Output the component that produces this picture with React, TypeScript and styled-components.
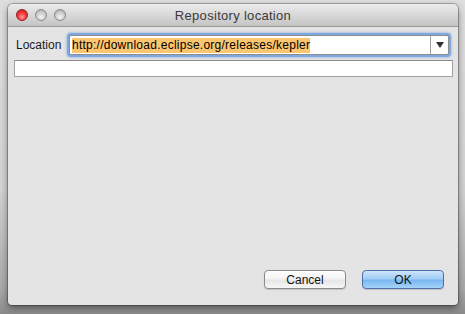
import React from "react";
import styled, { createGlobalStyle } from "styled-components";

const Global = createGlobalStyle`
  html, body { margin: 0; padding: 0; }
  body {
    width: 465px; height: 314px; overflow: hidden;
    background: #d6d6d6;
    font-family: "Liberation Sans", Arial, sans-serif;
  }
`;

const Desk = styled.div`
  width: 465px;
  height: 314px;
  box-sizing: border-box;
  padding: 4px 7px 0 8px;
  background: linear-gradient(180deg, #dedede 0%, #d2d2d2 60%, #a9a9a9 92%, #8a8a8a 100%);
`;

const Win = styled.div`
  width: 450px;
  height: 301px;
  display: flex;
  flex-direction: column;
  background: #e4e4e4;
  border-radius: 5px 5px 4px 4px;
  box-shadow: 0 0 0 1px rgba(0,0,0,0.25), 0 3px 7px rgba(0,0,0,0.45);
  overflow: hidden;
`;

const TitleBar = styled.div`
  height: 22px;
  flex: none;
  position: relative;
  display: flex;
  align-items: center;
  justify-content: center;
  background: linear-gradient(180deg, #ebebeb 0%, #d8d8d8 50%, #c4c4c4 100%);
  border-bottom: 1px solid #9a9a9a;
`;

const Lights = styled.div`
  position: absolute;
  left: 8px;
  top: 5px;
  display: flex;
  gap: 7px;
`;

const Light = styled.div<{ $red?: boolean }>`
  width: 12px;
  height: 12px;
  border-radius: 50%;
  box-sizing: border-box;
  border: 1px solid ${p => (p.$red ? "#9a1c1c" : "#8a8a8a")};
  background: ${p =>
    p.$red
      ? "radial-gradient(circle at 50% 70%, #ff9a9a 0%, #f23f3f 45%, #c81616 100%)"
      : "radial-gradient(circle at 50% 70%, #f4f4f4 0%, #cfcfcf 50%, #a5a5a5 100%)"};
`;

const Title = styled.div`
  font-size: 13px;
  color: #3a3a3a;
  letter-spacing: 0.3px;
  margin-top: 1px;
`;

const Body = styled.div`
  flex: 1;
  display: flex;
  flex-direction: column;
  padding: 7px 5px 16px 6px;
`;

const Row = styled.div`
  display: flex;
  align-items: center;
  height: 22px;
`;

const Label = styled.div`
  font-size: 12px;
  color: #1a1a1a;
  width: 55px;
  padding-left: 2px;
  box-sizing: border-box;
`;

const Combo = styled.div`
  width: 378px;
  height: 18px;
  display: flex;
  background: #fff;
  border: 1px solid #8d8d8d;
  border-radius: 2px;
  box-shadow: 0 0 0 2px #7ea8df, 0 0 2px 3px rgba(120,160,220,0.45);
`;

const ComboText = styled.div`
  flex: 1;
  display: flex;
  align-items: center;
  padding-left: 2px;
  font-size: 12px;
`;

const Sel = styled.span`
  background: #fcc670;
  color: #000;
  line-height: 15px;
  letter-spacing: 0.25px;
`;

const Arrow = styled.div`
  width: 17px;
  border-left: 1px solid #a0a0a0;
  display: flex;
  align-items: center;
  justify-content: center;
`;

const Field = styled.div`
  margin-top: 4px;
  width: 439px;
  height: 17px;
  box-sizing: border-box;
  background: #fff;
  border: 1px solid #a2a2a2;
  border-top-color: #8a8a8a;
`;

const Spacer = styled.div`
  flex: 1;
`;

const Buttons = styled.div`
  display: flex;
  justify-content: flex-end;
  gap: 16px;
  padding-right: 9px;
`;

const Button = styled.div<{ $primary?: boolean }>`
  width: 82px;
  height: 19px;
  box-sizing: border-box;
  border-radius: 4px;
  display: flex;
  align-items: center;
  justify-content: center;
  font-size: 12px;
  color: #111;
  border: 1px solid ${p => (p.$primary ? "#4f6fa8" : "#8a8a8a")};
  background: ${p =>
    p.$primary
      ? "linear-gradient(180deg, #cde4fb 0%, #a2cdf6 45%, #7ab7f1 55%, #a5d3fa 100%)"
      : "linear-gradient(180deg, #ffffff 0%, #f3f3f3 45%, #e6e6e6 55%, #f7f7f7 100%)"};
  box-shadow: 0 1px 1px rgba(0,0,0,0.15);
`;

export default function App() {
  return (
    <>
      <Global />
      <Desk>
        <Win>
          <TitleBar>
            <Lights>
              <Light $red />
              <Light />
              <Light />
            </Lights>
            <Title>Repository location</Title>
          </TitleBar>
          <Body>
            <Row>
              <Label>Location</Label>
              <Combo>
                <ComboText>
                  <Sel>http://download.eclipse.org/releases/kepler</Sel>
                </ComboText>
                <Arrow>
                  <svg width="8" height="6" viewBox="0 0 8 6">
                    <path d="M0 0 H8 L4 6 Z" fill="#333" />
                  </svg>
                </Arrow>
              </Combo>
            </Row>
            <Field />
            <Spacer />
            <Buttons>
              <Button>Cancel</Button>
              <Button $primary>OK</Button>
            </Buttons>
          </Body>
        </Win>
      </Desk>
    </>
  );
}
